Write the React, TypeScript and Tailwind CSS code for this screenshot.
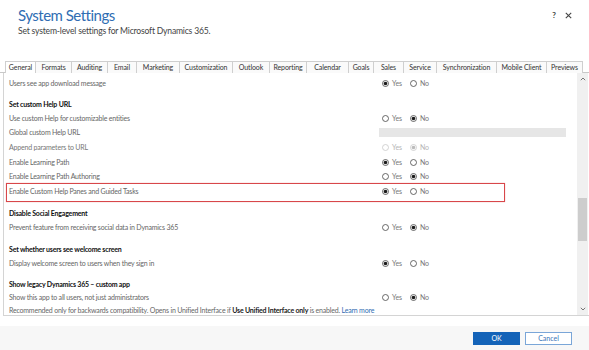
import React from "react";

type RowT =
  | { k: "row"; label: string; v: "yes" | "no"; h: number; dis?: boolean; box?: boolean }
  | { k: "input"; label: string; h: number }
  | { k: "head"; label: string; h: number }
  | { k: "space"; h: number }
  | { k: "note"; h: number };

const rows: RowT[] = [
  { k: "row", label: "Users see app download message", v: "yes", h: 14 },
  { k: "space", h: 7 },
  { k: "head", label: "Set custom Help URL", h: 14 },
  { k: "row", label: "Use custom Help for customizable entities", v: "no", h: 14 },
  { k: "input", label: "Global custom Help URL", h: 14 },
  { k: "row", label: "Append parameters to URL", v: "no", h: 16, dis: true },
  { k: "row", label: "Enable Learning Path", v: "yes", h: 14 },
  { k: "row", label: "Enable Learning Path Authoring", v: "no", h: 14 },
  { k: "row", label: "Enable Custom Help Panes and Guided Tasks", v: "yes", h: 16, box: true },
  { k: "space", h: 7 },
  { k: "head", label: "Disable Social Engagement", h: 14 },
  { k: "row", label: "Prevent feature from receiving social data in Dynamics 365", v: "no", h: 14 },
  { k: "space", h: 8 },
  { k: "head", label: "Set whether users see welcome screen", h: 14 },
  { k: "row", label: "Display welcome screen to users when they sign in", v: "yes", h: 14 },
  { k: "space", h: 7 },
  { k: "head", label: "Show legacy Dynamics 365 \u2013 custom app", h: 14 },
  { k: "row", label: "Show this app to all users, not just administrators", v: "no", h: 12 },
  { k: "note", h: 15 },
];

const tabs: [string, number][] = [
  ["General", 31],
  ["Formats", 36],
  ["Auditing", 36],
  ["Email", 29],
  ["Marketing", 43],
  ["Customization", 53],
  ["Outlook", 37],
  ["Reporting", 37],
  ["Calendar", 42],
  ["Goals", 25],
  ["Sales", 30],
  ["Service", 33],
  ["Synchronization", 60],
  ["Mobile Client", 50],
  ["Previews", 36],
];

function Radio({ on, dis }: { on: boolean; dis?: boolean }) {
  const c = dis ? "#c8c8c8" : "#444";
  return (
    <svg width="7" height="7" viewBox="0 0 7 7" className="shrink-0">
      <circle cx="3.5" cy="3.5" r="3" fill="white" stroke={c} strokeWidth="0.8" />
      {on && <circle cx="3.5" cy="3.5" r="1.8" fill={dis ? "#bbb" : "#1a1a1a"} />}
    </svg>
  );
}

function Radios({ v, dis }: { v: "yes" | "no"; dis?: boolean }) {
  const tc = dis ? "text-[#b5b5b5]" : "text-[#777]";
  return (
    <div className="flex items-center ml-[3px]">
      <Radio on={v === "yes"} dis={dis} />
      <span className={`ml-[3px] w-[18px] text-[7px] ${tc}`}>Yes</span>
      <Radio on={v === "no"} dis={dis} />
      <span className={`ml-[3px] text-[7px] ${tc}`}>No</span>
    </div>
  );
}

export default function App() {
  return (
    <div className="w-[589px] h-[350px] bg-white overflow-hidden flex flex-col font-['Lato',sans-serif]">
      {/* header */}
      <div className="h-[61px] flex justify-between pl-[18px] pr-[17px]">
        <div className="pt-[6px]">
          <div className="text-[15px] leading-[19px] tracking-[-0.5px] text-[#2f6db3]">System Settings</div>
          <div className="text-[8.6px] leading-[11px] tracking-[-0.2px] text-[#444] mt-[1px]">
            Set system-level settings for Microsoft Dynamics 365.
          </div>
        </div>
        <div className="flex items-start pt-[9px] gap-[9px] text-[#444]">
          <span className="text-[8px] font-bold leading-[12px]">?</span>
          <svg width="7" height="7" viewBox="0 0 7 7" className="mt-[3px]">
            <path d="M0.8 0.8 L6.2 6.2 M6.2 0.8 L0.8 6.2" stroke="#444" strokeWidth="1.1" />
          </svg>
        </div>
      </div>

      {/* tabs */}
      <div className="h-[12px] flex pl-[5px] border-b border-[#c8c8c8]">
        {tabs.map(([t, w], i) => (
          <div
            key={t}
            style={{ width: w }}
            className={`h-[12px] flex items-center justify-center text-[7px] tracking-[-0.1px] text-[#333] border-t border-r border-[#cfcfcf] ${
              i === 0 ? "border-l bg-white" : "bg-[#fafafa]"
            }`}
          >
            {t}
          </div>
        ))}
      </div>

      {/* content */}
      <div className="h-[243px] ml-[3px] flex border-l border-b border-[#d4d4d4] tracking-[-0.2px]">
        <div className="flex-1 overflow-hidden pt-[3px] pl-[2px]">
          {rows.map((r, i) => {
            if (r.k === "space") return <div key={i} style={{ height: r.h }} />;
            if (r.k === "head")
              return (
                <div key={i} style={{ height: r.h }} className="flex items-center pl-[3px] text-[7px] font-bold text-[#111]">
                  {r.label}
                </div>
              );
            if (r.k === "note")
              return (
                <div key={i} style={{ height: r.h }} className="flex items-center pl-[3px] text-[7px] text-[#666] whitespace-nowrap">
                  Recommended only for backwards compatibility. Opens in Unified Interface if&nbsp;
                  <span className="font-bold text-[#222]">Use Unified Interface only</span>&nbsp;is enabled.&nbsp;
                  <span className="text-[#2f6db3]">Learn more</span>
                </div>
              );
            if (r.k === "input")
              return (
                <div key={i} style={{ height: r.h }} className="flex items-center">
                  <div className="w-[373px] pl-[3px] text-[7px] text-[#666]">{r.label}</div>
                  <div className="w-[187px] h-[9px] bg-[#e6e6e6]" />
                </div>
              );
            return (
              <div key={i} style={{ height: r.h }} className="relative flex items-center">
                <div className={`w-[373px] pl-[3px] text-[7px] ${r.dis ? "text-[#777]" : "text-[#666]"}`}>{r.label}</div>
                <Radios v={r.v} dis={r.dis} />
                {r.box && (
                  <div className="absolute left-[0px] top-[0px] w-[499px] h-[19px] border border-[#d8474a] shadow-[0_0_1px_#e9a0a0]" />
                )}
              </div>
            );
          })}
        </div>
        {/* scrollbar */}
        <div className="w-[11px] mr-[1px] bg-[#f0f0f0] flex flex-col">
          <div className="h-[12px] flex items-center justify-center">
            <svg width="6" height="4" viewBox="0 0 6 4">
              <path d="M0.8 3.2 L3 1 L5.2 3.2" stroke="#666" strokeWidth="0.9" fill="none" />
            </svg>
          </div>
          <div className="h-[113px]" />
          <div className="h-[43px] mx-[1px] bg-[#cdcdcd]" />
          <div className="flex-1" />
          <div className="h-[12px] flex items-center justify-center">
            <svg width="6" height="4" viewBox="0 0 6 4">
              <path d="M0.8 0.8 L3 3 L5.2 0.8" stroke="#666" strokeWidth="0.9" fill="none" />
            </svg>
          </div>
        </div>
      </div>

      {/* footer */}
      <div className="h-[10px] bg-white" />
      <div className="flex-1 bg-[#f7f7f7] flex justify-end items-start pt-[6px] pr-[17px] gap-[5px]">
        <div className="w-[47px] h-[13px] bg-[#1463b8] text-white text-[7px] flex items-center justify-center">OK</div>
        <div className="w-[47px] h-[13px] bg-white border border-[#7aa6d8] text-[#3b74b8] text-[7px] flex items-center justify-center">
          Cancel
        </div>
      </div>
    </div>
  );
}
